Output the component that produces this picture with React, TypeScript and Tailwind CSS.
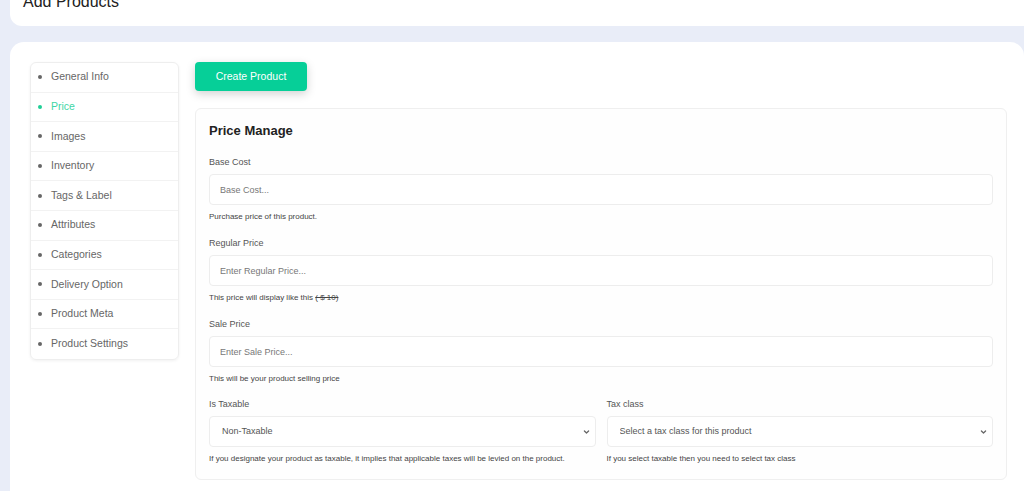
import { ReactNode } from 'react';

const menu = [
  'General Info',
  'Price',
  'Images',
  'Inventory',
  'Tags & Label',
  'Attributes',
  'Categories',
  'Delivery Option',
  'Product Meta',
  'Product Settings',
];

function Chevron() {
  return (
    <svg
      className="pointer-events-none absolute right-[6px] top-1/2 -translate-y-1/2 w-[7px] h-[7px] text-[#666]"
      viewBox="0 0 10 10"
      fill="none"
      stroke="currentColor"
      strokeWidth={1.8}
    >
      <path d="M2 3.5l3 3 3-3" strokeLinecap="round" strokeLinejoin="round" />
    </svg>
  );
}

function Field({ label, placeholder, help }: { label: string; placeholder: string; help: ReactNode }) {
  return (
    <div className="flex flex-col">
      <label className="text-[9px] leading-[12px] text-[#555]">{label}</label>
      <input
        placeholder={placeholder}
        className="mt-[6px] h-[31px] w-full rounded-[4px] border border-[#ededed] bg-white px-[10px] text-[9px] text-[#333] outline-none placeholder:text-[#777]"
      />
      <p className="mt-[7px] text-[8px] leading-[10px] text-[#444]">{help}</p>
    </div>
  );
}

function SelectField({ label, options, help }: { label: string; options: string[]; help: string }) {
  return (
    <div className="flex flex-col">
      <label className="text-[9px] leading-[12px] text-[#555]">{label}</label>
      <div className="relative mt-[6px]">
        <select className="h-[31px] w-full appearance-none rounded-[4px] border border-[#ededed] bg-white pl-[12px] pr-[20px] text-[9px] text-[#555] outline-none">
          {options.map((o) => (
            <option key={o}>{o}</option>
          ))}
        </select>
        <Chevron />
      </div>
      <p className="mt-[7px] text-[8px] leading-[10px] text-[#444]">{help}</p>
    </div>
  );
}

export default function App() {
  return (
    <div
      className="min-h-[491px] h-[491px] overflow-hidden bg-[#e9edf8]"
      style={{ fontFamily: '"Liberation Sans", Arial, sans-serif' }}
    >
      {/* Header */}
      <div className="ml-[10px] -mt-[40px] rounded-bl-[12px] bg-white pl-[13px] pt-[28px] pb-[10px]">
        <h1 className="text-[16px] leading-[28px] text-[#222]">Add Products</h1>
      </div>

      {/* Main card */}
      <div className="ml-[10px] mt-[16px] flex gap-[16px] rounded-t-[14px] bg-white pl-[20px] pr-[17px] pt-[20px] pb-[40px]">
        {/* Sidebar */}
        <div className="w-[149px] shrink-0 self-start overflow-hidden rounded-[6px] border border-[#eeeeee] shadow-[0_1px_3px_rgba(0,0,0,0.06)]">
          {menu.map((item, i) => (
            <div
              key={item}
              className={`flex h-[29.6px] items-center gap-[9px] pl-[7px] text-[10.5px] ${
                i < menu.length - 1 ? 'border-b border-[#f2f2f2]' : ''
              } ${item === 'Price' ? 'text-[#3dd6a5]' : 'text-[#666]'}`}
            >
              <span
                className={`h-[4px] w-[4px] rounded-full ${item === 'Price' ? 'bg-[#1fcf96]' : 'bg-[#666]'}`}
              />
              {item}
            </div>
          ))}
        </div>

        {/* Content */}
        <div className="flex-1 min-w-0">
          <button className="h-[29px] w-[112px] rounded-[4px] bg-[#06cf98] text-[10.5px] text-white shadow-[0_3px_10px_rgba(0,0,0,0.18)]">
            Create Product
          </button>

          <div className="mt-[17px] rounded-[6px] border border-[#efefef] bg-[#fefefe] px-[13px] pt-[14px] pb-[15px]">
            <h2 className="text-[13px] font-bold leading-[16px] text-[#222]">Price Manage</h2>

            <div className="mt-[17px] flex flex-col gap-[15px]">
              <Field label="Base Cost" placeholder="Base Cost..." help="Purchase price of this product." />
              <Field
                label="Regular Price"
                placeholder="Enter Regular Price..."
                help={
                  <>
                    This price will display like this <span className="line-through">( $ 10)</span>
                  </>
                }
              />
              <Field label="Sale Price" placeholder="Enter Sale Price..." help="This will be your product selling price" />
              <div className="-mt-[1px] grid grid-cols-2 gap-[11px]">
                <SelectField
                  label="Is Taxable"
                  options={['Non-Taxable', 'Taxable']}
                  help="If you designate your product as taxable, it implies that applicable taxes will be levied on the product."
                />
                <SelectField
                  label="Tax class"
                  options={['Select a tax class for this product']}
                  help="If you select taxable then you need to select tax class"
                />
              </div>
            </div>
          </div>
        </div>
      </div>
    </div>
  );
}
